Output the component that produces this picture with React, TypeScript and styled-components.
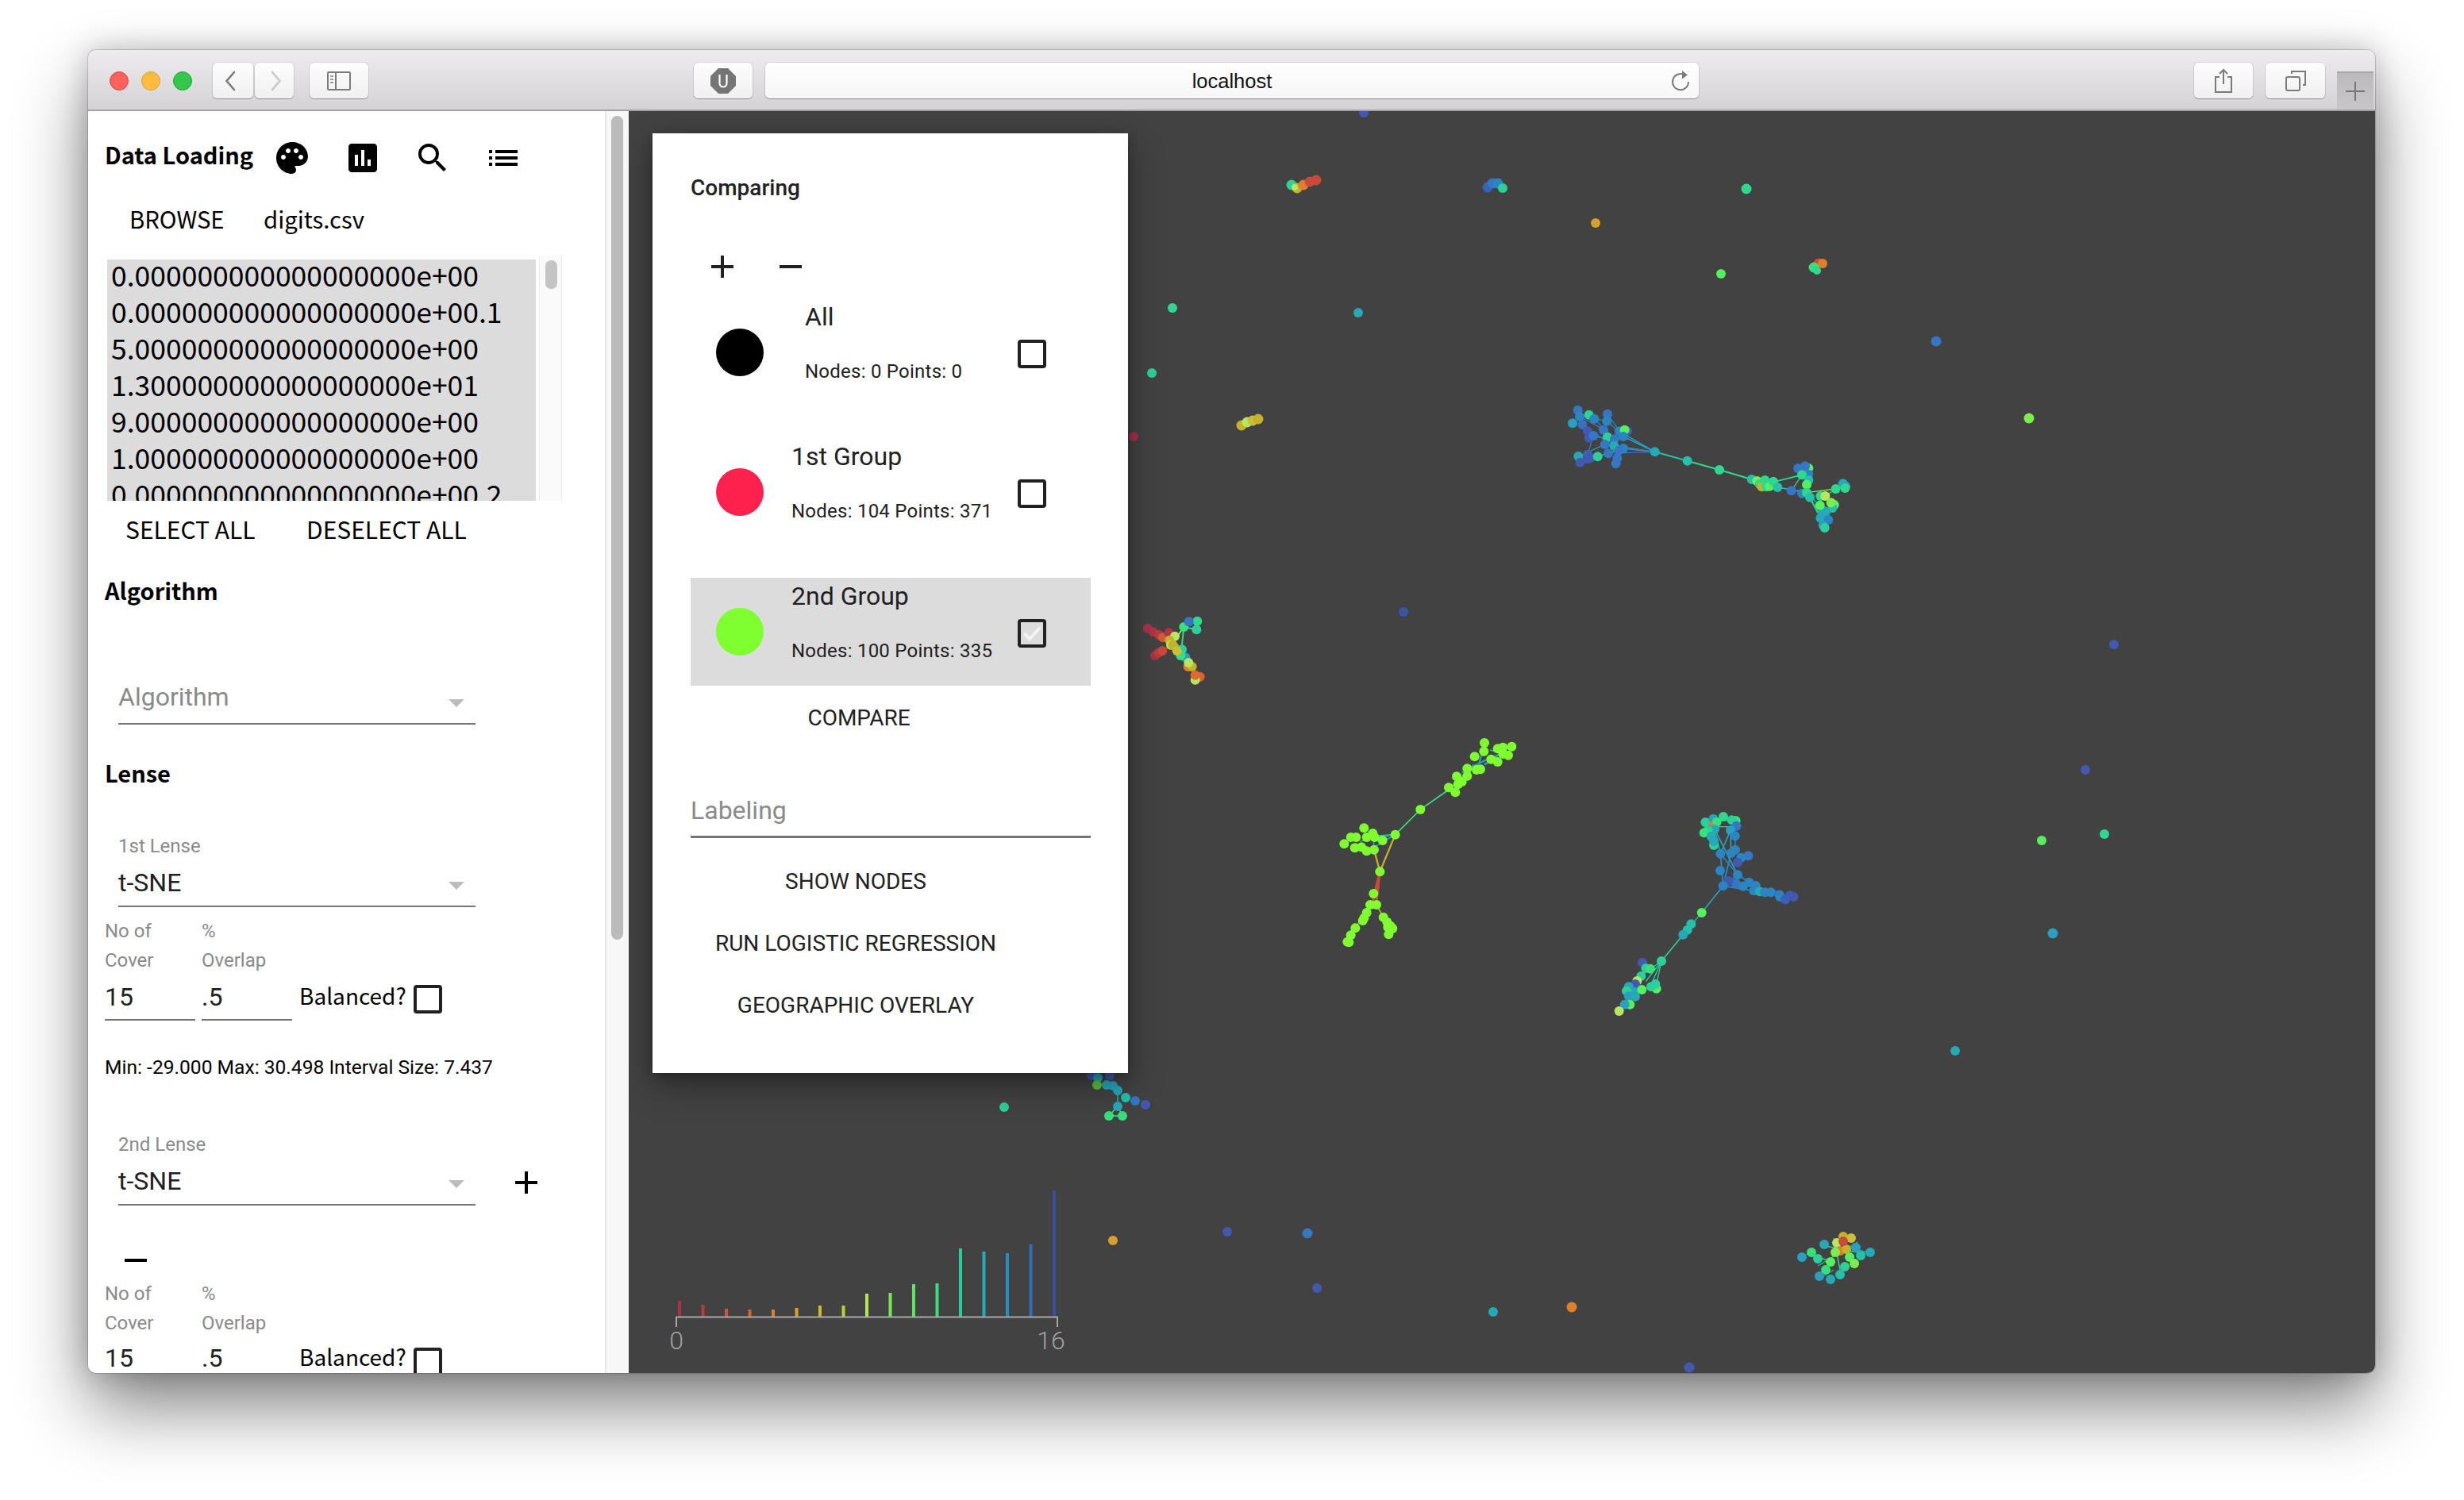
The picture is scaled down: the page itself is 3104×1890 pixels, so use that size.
import React from 'react';
import styled, {createGlobalStyle} from 'styled-components';
import {MdPalette, MdAssessment, MdSearch, MdList, MdAdd, MdRemove} from 'react-icons/md';

const SD = `"Noto Sans CJK KR", "Noto Sans", sans-serif`;
const RB = `Roboto, "Liberation Sans", sans-serif`;

const GlobalStyle = createGlobalStyle`
  html, body { margin: 0; padding: 0; background: #fff; }
  body { width: 3104px; height: 1890px; overflow: hidden; font-family: ${RB}; }
`;

const Page = styled.div`
  width: 3104px;
  height: 1890px;
  padding: 63px 0 0 111px;
  box-sizing: border-box;
`;
const Window = styled.div`
  width: 2881px;
  height: 1667px;
  border-radius: 10px;
  overflow: hidden;
  display: flex;
  flex-direction: column;
  box-shadow: 0 44px 90px rgba(0, 0, 0, 0.48), 0 0 36px rgba(0, 0, 0, 0.22), 0 0 0 1px rgba(0, 0, 0, 0.16);
`;

/* title bar */
const TitleBar = styled.div`
  height: 77px;
  flex: none;
  display: flex;
  align-items: flex-start;
  padding: 16px 0 0 27px;
  box-sizing: border-box;
  background: linear-gradient(#eeecee, #d4d2d4);
  border-bottom: 2px solid #a3a1a3;
`;
const Light = styled.span<{$c: string; $b: string}>`
  width: 24px;
  height: 24px;
  margin: 11px 16px 0 0;
  border-radius: 50%;
  background: ${p => p.$c};
  border: 1px solid ${p => p.$b};
  box-sizing: border-box;
`;
const ChromeBtn = styled.div<{$w: number; $ml?: number; $pl?: number; $pr?: number}>`
  width: ${p => p.$w}px;
  height: 45px;
  margin-left: ${p => p.$ml || 0}px;
  padding: 0 ${p => p.$pr || 0}px 0 ${p => p.$pl || 0}px;
  box-sizing: border-box;
  flex: none;
  display: flex;
  align-items: center;
  justify-content: center;
  border-radius: 6px;
  background: linear-gradient(#fdfdfd, #f1f0f1);
  box-shadow: 0 1px 1px rgba(0, 0, 0, 0.28), 0 0 0 1px rgba(0, 0, 0, 0.07);
`;
const UrlBar = styled.div`
  flex: none;
  width: 1176px;
  height: 45px;
  margin-left: 16px;
  padding-top: 2px;
  box-sizing: border-box;
  position: relative;
  display: flex;
  align-items: center;
  justify-content: center;
  border-radius: 6px;
  background: linear-gradient(#ffffff, #f6f6f6);
  box-shadow: 0 1px 1px rgba(0, 0, 0, 0.28), 0 0 0 1px rgba(0, 0, 0, 0.08);
  font: 25.5px "Liberation Sans", sans-serif;
  color: #111;
`;
const Reload = styled.svg`
  position: absolute;
  right: 10px;
  top: 9px;
`;
const NewTab = styled.div`
  width: 46px;
  height: 48px;
  margin: 11px 0 0 15px;
  flex: none;
  display: flex;
  align-items: center;
  justify-content: center;
  background: linear-gradient(#bcbabc, #c8c6c8);
  border-top: 2px solid #a9a7a9;
  box-sizing: border-box;
`;

/* main area */
const Content = styled.div`
  flex: 1;
  display: flex;
  min-height: 0;
`;
const Sidebar = styled.div`
  width: 681px;
  flex: none;
  display: flex;
  background: #fff;
  overflow: hidden;
`;
const SideContent = styled.div`
  width: 651px;
  flex: none;
  padding-left: 21px;
  box-sizing: border-box;
  overflow: hidden;
  color: #000;
`;
const ScrollTrack = styled.div`
  width: 30px;
  flex: none;
  background: #f7f7f7;
  border-left: 2px solid #e8e8e8;
  box-sizing: border-box;
  padding: 6px 0 0 6px;
`;
const ScrollThumb = styled.div`
  width: 15px;
  height: 1038px;
  border-radius: 8px;
  background: #bbb;
`;
const Header = styled.div`
  display: flex;
  align-items: center;
  height: 48px;
  margin-top: 35px;
`;
const Title = styled.div`
  width: 187px;
  margin: -11px 25px 0 0;
  font: 700 29px ${SD};
  white-space: nowrap;
`;
const IconSlot = styled.span<{$mr?: number}>`
  width: 48px;
  height: 48px;
  flex: none;
  margin-right: ${p => p.$mr || 0}px;
  display: flex;
  align-items: center;
  justify-content: center;
  font-size: 48px;
  color: #000;
`;
const BrowseRow = styled.div`
  display: flex;
  height: 40px;
  margin: 34px 0 0 31px;
  font: 400 29.3px/37px ${SD};
`;
const SideBtn = styled.span<{$w: number}>`
  width: ${p => p.$w}px;
  flex: none;
  white-space: nowrap;
  text-transform: uppercase;
`;
const ListWrap = styled.div`
  display: flex;
  align-items: flex-start;
  margin: 25px 0 0 3px;
  height: 309px;
`;
const ListBody = styled.div`
  width: 540px;
  height: 304px;
  margin-top: 5px;
  padding-left: 5px;
  box-sizing: border-box;
  background: #dcdcdc;
  overflow: hidden;
  font: 400 35.5px/38px ${SD};
  white-space: nowrap;
`;
const ListLine = styled.div`
  height: 38px;
  margin-bottom: 8px;
`;
const ListTrack = styled.div`
  width: 29px;
  height: 309px;
  margin-left: 4px;
  flex: none;
  background: #fafafa;
  border-left: 1px solid #ececec;
  border-right: 1px solid #ececec;
  box-sizing: border-box;
  padding: 6px 0 0 7px;
`;
const ListThumb = styled.div`
  width: 15px;
  height: 36px;
  border-radius: 7px;
  background: #c4c4c4;
`;
const SelectRow = styled.div`
  display: flex;
  height: 40px;
  margin: 17px 0 0 26px;
  font: 400 30px/37px ${SD};
`;
const Heading = styled.div<{$mt: number}>`
  height: 40px;
  margin-top: ${p => p.$mt}px;
  font: 700 29px/36px ${SD};
`;
const FieldLabel = styled.div<{$mt: number}>`
  margin: ${p => p.$mt}px 0 0 17px;
  font: 400 24px/32px ${RB};
  color: #8a8a8a;
  height: 32px;
`;
const SelectValue = styled.div<{$mt: number; $pb: number; $muted?: boolean}>`
  width: 450px;
  box-sizing: content-box;
  margin: ${p => p.$mt}px 0 0 17px;
  padding-bottom: ${p => p.$pb}px;
  height: 44px;
  display: flex;
  justify-content: space-between;
  border-bottom: 2px solid #757575;
  font: 400 32px/44px ${RB};
  color: ${p => (p.$muted ? '#8a8a8a' : '#212121')};
`;
const Arrow = styled.span<{$mt: number}>`
  width: 0;
  height: 0;
  margin: ${p => p.$mt}px 14px 0 0;
  border-left: 10px solid transparent;
  border-right: 10px solid transparent;
  border-top: 10px solid #bcbcbc;
`;
const LenseRow = styled.div`
  display: flex;
  align-items: flex-start;
`;
const PlusSlot = styled(IconSlot)`
  margin: 8px 0 0 40px;
`;
const MinusSlot = styled(IconSlot)`
  margin: 45px 0 0 15px;
`;
const CoverLabels = styled.div<{$mt: number}>`
  display: flex;
  margin-top: ${p => p.$mt}px;
  font: 400 24px/37px ${RB};
  color: #8a8a8a;
`;
const CoverLabel = styled.div`
  width: 122px;
  flex: none;
`;
const InputRow = styled.div<{$mt: number}>`
  display: flex;
  align-items: flex-start;
  margin-top: ${p => p.$mt}px;
`;
const NumInput = styled.div`
  width: 114px;
  height: 44px;
  margin-right: 8px;
  padding-bottom: 4px;
  border-bottom: 2px solid #757575;
  font: 400 32px/41px ${RB};
  color: #212121;
`;
const Balanced = styled.span`
  margin: -4px 11px 0 1px;
  font: 400 28px/44px ${SD};
  white-space: nowrap;
  width: 133px;
`;
const Check = styled.span<{$mt?: number}>`
  width: 36px;
  height: 36px;
  flex: none;
  margin-top: ${p => p.$mt || 0}px;
  box-sizing: border-box;
  border: 4px solid #212121;
  border-radius: 4px;
  display: flex;
  align-items: center;
  justify-content: center;
`;
const Range = styled.div`
  margin-top: 43px;
  font: 400 24.6px/32px ${RB};
  white-space: nowrap;
`;

/* canvas */
const Canvas = styled.div`
  flex: 1;
  position: relative;
  background: #424242;
  overflow: hidden;
`;
const Graph = styled.svg`
  position: absolute;
  left: 0;
  top: 0;
`;
const Histogram = styled.svg`
  position: absolute;
  left: 41px;
  top: 1350px;
`;
const Panel = styled.div`
  position: absolute;
  left: 30px;
  top: 28px;
  width: 599px;
  height: 1184px;
  padding: 51px 47px 0 48px;
  box-sizing: border-box;
  background: #fff;
  color: #212121;
  box-shadow: 0 16px 40px rgba(0, 0, 0, 0.35), 0 4px 12px rgba(0, 0, 0, 0.25);
`;
const PanelTitle = styled.div`
  height: 36px;
  font: 500 28px/36px ${RB};
`;
const PanelIcons = styled.div`
  display: flex;
  margin: 57px 0 0 16px;
`;
const PanelIcon = styled(IconSlot)`
  color: #212121;
`;
const GroupRow = styled.div<{$sel?: boolean; $mt: number}>`
  height: 136px;
  margin-top: ${p => p.$mt}px;
  display: grid;
  grid-template-columns: 127px 285px 36px;
  background: ${p => (p.$sel ? '#dcdcdc' : 'transparent')};
`;
const Dot = styled.span<{$c: string}>`
  width: 60px;
  height: 60px;
  margin: 38px 0 0 32px;
  border-radius: 50%;
  background: ${p => p.$c};
`;
const GroupText = styled.div<{$pl?: number}>`
  padding-left: ${p => p.$pl || 0}px;
`;
const GroupName = styled.div`
  height: 46px;
  font: 400 32px/46px ${RB};
`;
const GroupStats = styled.div`
  margin-top: 23px;
  font: 400 24px/46px ${RB};
  letter-spacing: 0.24px;
  white-space: nowrap;
`;
const ActionBtn = styled.div<{$w: number; $mt: number}>`
  width: ${p => p.$w}px;
  height: 40px;
  margin-top: ${p => p.$mt}px;
  text-align: center;
  font: 400 28px/42px ${RB};
  white-space: nowrap;
`;
const LabelInput = styled.div`
  height: 44px;
  margin-top: 75px;
  padding-bottom: 10px;
  border-bottom: 3px solid #757575;
  font: 400 32px/44px ${RB};
  color: #8a8a8a;
`;

/* graph data, drawn at 3x of page pixels around an origin */
type Node = [number, number, string, number?];
type Edge = [number, number, number, number, string, number?];
interface ClusterData {
  x: number;
  y: number;
  edges: Edge[];
  nodes: Node[];
}

const BLUE = '#3577c4';
const B2 = '#2a85c0';
const B3 = '#2a9fc0';
const IND = '#4358b0';
const TEAL = '#25a9b5';
const TG = '#25c0a8';
const GR = '#2bd09a';
const G2 = '#2fd88f';
const G3 = '#36e07a';
const G4 = '#55ef60';
const LM = '#7aee50';
const YL = '#b5e860';
const OL = '#c8b02a';
const OR = '#df7f2b';
const RD = '#c94a3a';
const MR = '#a5324a';
const LIME = '#7fff2f';

const lime = (pts: number[][]): Node[] => pts.map(([x, y]) => [x, y, LIME] as Node);

const clusters: ClusterData[] = [
  {
    x: 1950,
    y: 480,
    edges: [
      [404, 268, 527, 302, TG, 6], [527, 302, 648, 336, G2, 6], [648, 336, 770, 372, G2, 7],
      [404, 268, 285, 210, B3, 5], [404, 268, 270, 190, B3, 4], [404, 268, 285, 255, B3, 5],
      [404, 268, 250, 245, B3, 4], [404, 268, 228, 274, BLUE, 4], [404, 268, 215, 240, BLUE, 4],
      [175, 143, 252, 220, B2, 4], [150, 190, 285, 255, B2, 4], [225, 152, 285, 210, B2, 4],
      [130, 165, 270, 262, BLUE, 4], [172, 207, 150, 278, BLUE, 4], [215, 240, 115, 285, TEAL, 4],
      [120, 135, 215, 185, B2, 4], [188, 286, 285, 255, GR, 4], [175, 143, 225, 152, B2, 4],
      [155, 215, 285, 210, BLUE, 4], [225, 125, 285, 210, B2, 4],
      [860, 380, 960, 355, G2, 5], [920, 415, 960, 355, G2, 4], [868, 402, 978, 422, TG, 5],
      [978, 422, 1088, 408, LM, 4], [990, 440, 1030, 510, TG, 5], [978, 422, 1050, 495, TG, 4],
      [978, 422, 1020, 500, G2, 4], [1088, 408, 1048, 435, G2, 4],
    ],
    nodes: [
      [113, 110, BLUE], [120, 135, B2], [93, 160, B3], [130, 165, '#3a6ec0'], [155, 128, GR],
      [175, 143, B2], [225, 125, BLUE], [223, 152, B2], [150, 190, IND], [210, 185, BLUE],
      [300, 190, IND], [270, 190, B2], [290, 185, G4], [155, 215, IND], [172, 207, BLUE],
      [225, 212, GR], [252, 220, BLUE], [285, 210, B2], [215, 240, BLUE], [250, 245, TEAL],
      [285, 255, B2], [270, 262, BLUE], [228, 274, BLUE], [150, 278, '#3a60b8'], [115, 285, TEAL],
      [122, 308, IND], [150, 295, IND], [160, 292, IND], [188, 286, GR], [262, 292, BLUE], [257, 312, BLUE],
      [404, 268, TEAL], [527, 302, TG], [648, 336, G2],
      [770, 372, TG], [790, 378, LM], [800, 390, G2], [808, 400, OL], [820, 375, G2], [825, 400, G2],
      [838, 398, G4], [852, 380, G2], [868, 402, TG], [920, 415, BLUE], [960, 425, B2],
      [985, 330, G4], [945, 330, BLUE], [972, 322, BLUE], [985, 353, B2], [960, 355, G2], [985, 375, TG],
      [978, 392, G4], [978, 422, G2], [990, 440, TG], [1030, 435, G2], [1082, 468, G4], [1075, 480, TG],
      [1050, 495, TEAL], [1040, 490, TEAL], [1030, 518, TEAL], [1060, 525, B2], [1040, 545, B3],
      [1046, 555, GR], [1048, 435, YL], [1070, 460, LM], [1028, 470, G4], [1088, 408, G2],
      [1115, 388, TEAL], [1125, 398, B3], [1123, 405, G2],
    ],
  },
  {
    x: 1660,
    y: 910,
    edges: [
      [293, 425, 388, 330, G3, 5], [388, 330, 495, 255, G3, 5], [293, 425, 235, 565, OL, 7],
      [213, 482, 235, 565, OL, 7], [235, 565, 205, 690, RD, 10], [235, 565, 222, 680, RD, 9],
      [198, 690, 142, 778, OR, 5], [222, 690, 248, 737, OL, 5], [293, 425, 225, 430, TG, 6],
      [293, 425, 215, 470, B3, 5], [293, 425, 160, 450, TEAL, 4], [210, 430, 213, 482, B3, 5],
      [510, 240, 590, 160, B3, 6], [620, 120, 610, 155, TEAL, 6], [650, 105, 690, 115, TEAL, 5],
      [620, 150, 690, 120, B3, 6], [630, 160, 680, 130, B3, 8], [545, 190, 620, 150, TEAL, 6],
    ],
    nodes: lime([
      [630, 78], [628, 110], [593, 130], [680, 100], [700, 95], [733, 92], [720, 125], [700, 120],
      [655, 140], [680, 150], [600, 180], [565, 175], [615, 178], [525, 205], [565, 203], [545, 225],
      [495, 247], [520, 265], [530, 235], [388, 330], [293, 425], [175, 400], [208, 420], [245, 447],
      [185, 435], [215, 435], [145, 435], [125, 435], [100, 460], [140, 475], [165, 472], [185, 487],
      [213, 482], [235, 565], [211, 648], [198, 690], [222, 690], [185, 720], [175, 740], [170, 750],
      [142, 778], [125, 805], [112, 830], [118, 832], [248, 737], [262, 755], [275, 770], [283, 780],
      [265, 775], [268, 802],
    ]),
  },
  {
    x: 2010,
    y: 1010,
    edges: [
      [482, 319, 401, 420, TEAL, 5], [401, 420, 331, 503, TEAL, 5], [331, 503, 249, 603, GR, 5],
      [249, 603, 190, 680, GR, 4], [249, 603, 215, 680, GR, 4], [249, 603, 230, 690, GR, 4], [249, 603, 170, 660, GR, 4],
      [472, 197, 482, 319, B2, 6], [512, 195, 482, 319, B2, 6], [450, 105, 537, 277, B3, 5],
      [510, 108, 472, 197, B3, 5], [450, 105, 472, 197, TEAL, 5], [510, 108, 512, 195, TEAL, 5],
      [527, 130, 528, 182, B2, 5], [415, 78, 510, 70, GR, 4], [450, 95, 510, 95, GR, 4], [472, 197, 537, 277, B2, 5],
      [482, 319, 598, 337, B2, 5], [537, 277, 605, 318, B2, 5], [482, 319, 537, 277, B2, 5],
    ],
    nodes: [
      [415, 78, GR], [445, 65, B3], [483, 57, G2], [530, 72, G3], [515, 70, GR], [458, 77, G3],
      [437, 85, OR, 8], [532, 92, BLUE], [510, 108, B3], [450, 105, TEAL], [425, 108, GR], [410, 118, G3],
      [437, 132, TEAL], [447, 165, GR], [447, 150, TEAL], [527, 130, B2], [528, 182, B2], [472, 197, B2],
      [512, 195, B2], [577, 205, BLUE], [550, 212, B2], [537, 230, IND], [471, 261, B2], [537, 277, B2],
      [530, 310, BLUE], [502, 300, IND], [482, 319, B2], [557, 320, B2], [580, 305, B2], [605, 318, B2],
      [598, 337, B2], [620, 340, TEAL], [640, 343, B2], [663, 343, B2], [695, 352, BLUE], [697, 360, B2],
      [735, 355, '#3f5ab0'], [717, 370, '#3a60b8'], [748, 360, IND],
      [401, 420, G4], [361, 463, TG], [347, 485, TG], [331, 503, TEAL], [249, 603, GR], [177, 608, IND],
      [190, 630, GR], [207, 632, G3], [172, 660, GR], [157, 678, YL], [150, 690, IND], [230, 707, G4],
      [210, 700, GR], [226, 690, GR], [125, 700, TEAL], [148, 720, TEAL], [175, 711, G4], [117, 716, GR],
      [125, 735, B3], [150, 737, TEAL], [130, 767, G4], [110, 767, B3], [89, 792, YL],
    ],
  },
  {
    x: 1400,
    y: 760,
    edges: [
      [274, 90, 232, 150, LM, 6], [274, 90, 265, 175, G2, 6], [274, 90, 322, 100, GR, 6],
      [240, 145, 265, 175, G3, 6], [195, 130, 225, 155, OR, 5], [193, 180, 225, 160, RD, 5],
    ],
    nodes: [
      [137, 95, MR], [158, 108, '#ac3547'], [180, 120, '#b93a3f'], [195, 130, '#d05a35'], [218, 112, '#b03545'],
      [165, 198, MR], [178, 188, '#b93a3f'], [193, 180, RD], [240, 125, YL], [220, 140, OL], [225, 158, YL],
      [232, 158, OL], [274, 90, G3], [325, 68, G2], [293, 70, BLUE], [322, 100, GR], [267, 175, GR],
      [280, 205, B3], [262, 198, G3], [248, 180, '#c8c03a'], [290, 240, OR], [305, 240, OL], [292, 225, YL],
      [335, 278, '#d9622d'], [317, 290, YL], [317, 272, '#df6a2b'],
    ],
  },
  {
    x: 1360,
    y: 1340,
    edges: [
      [144, 162, 111, 198, G3, 5], [144, 162, 162, 198, G3, 5], [111, 198, 162, 198, G3, 5],
      [144, 102, 144, 162, TEAL, 5],
    ],
    nodes: [
      [45, 45, IND], [114, 45, IND], [69, 54, TEAL], [66, 81, '#5cc040'], [102, 81, TEAL],
      [126, 84, B3], [144, 102, TEAL], [174, 129, TG], [210, 141, BLUE], [249, 156, IND],
      [144, 162, TEAL], [111, 198, G3], [162, 198, G3],
    ],
  },
  {
    x: 2250,
    y: 1530,
    edges: [
      [78, 150, 180, 180, G2, 4], [180, 90, 210, 240, G3, 4], [150, 120, 300, 150, GR, 4],
      [120, 195, 270, 105, TG, 4], [270, 135, 324, 147, TEAL, 4], [180, 210, 120, 246, TEAL, 4],
    ],
    nodes: [
      [60, 162, B3], [96, 144, G3], [120, 168, GR], [144, 114, TEAL], [168, 180, G4], [150, 210, G3],
      [192, 108, YL], [216, 84, OL], [246, 90, '#c8c03a'], [204, 138, OR], [228, 132, OL], [186, 144, LM],
      [240, 162, G4], [222, 198, GR], [264, 126, B3], [258, 186, LM], [204, 228, TG], [168, 246, TEAL],
      [126, 234, B3], [318, 144, TEAL], [282, 156, TG], [216, 102, RD],
    ],
  },
];

// page coordinates, radius in page pixels
const singles: [number, number, string, number][] = [
  [1718, 142, IND, 6], [2200, 238, G2, 6.5], [2010, 281, '#d8a02a', 6], [2168, 345, G4, 6], [1711, 394, TEAL, 6],
  [1477, 388, G2, 6], [1451, 470, GR, 6], [1428, 550, MR, 6], [2439, 430, BLUE, 6.5], [2556, 527, LM, 6.5],
  [1768, 771, '#3a55a8', 6], [2663, 812, IND, 6], [2627, 970, IND, 6], [2572, 1059, G4, 6],
  [2651, 1051, G2, 6], [2586, 1176, B3, 6.5], [2463, 1324, TEAL, 6], [1265, 1395, GR, 6], [1402, 1563, '#d8a02a', 6],
  [1546, 1552, IND, 6], [1647, 1554, BLUE, 6.5], [1659, 1623, IND, 6], [1881, 1653, TEAL, 6], [1980, 1647, OR, 6.5],
  [2128, 1723, IND, 6.5],
  // tiny groups
  [1627, 233, GR, 6.5], [1634, 237, OL, 6.5], [1642, 233, OR, 6.5], [1650, 229, RD, 6.5], [1658, 227, RD, 6.5], [1631, 236, YL, 4],
  [1874, 236, '#3a60b8', 6.5], [1880, 231, BLUE, 6.5], [1887, 231, B2, 6.5], [1893, 237, GR, 6],
  [2291, 332, RD, 6.5], [2296, 332, OR, 6], [2285, 337, G3, 6.5], [2289, 341, G2, 5],
  [1564, 536, OL, 6.5], [1571, 532, YL, 6.5], [1578, 530, '#c8c03a', 6.5], [1585, 528, OL, 6.5],
];

const bars: [number, string][] = [
  [20, '#a5324a'], [15, '#b93a3f'], [10, '#d4523a'], [9, '#d9622d'], [9, '#df7f2b'], [11, '#dca12b'],
  [14, '#cdb92d'], [14, '#bad13a'], [29, '#b2e555'], [30, '#74ec51'], [41, '#57e860'], [42, '#36e07a'],
  [86, '#25cf9b'], [82, '#22adb8'], [80, '#2190c0'], [91, '#2e6fb8'], [159, '#3b4da0'],
];

const ClusterGroup = ({x, y, edges, nodes}: ClusterData) => (
  <g transform={`translate(${x} ${y}) scale(${1 / 3})`}>
    {edges.map((e, i) => (
      <line key={i} x1={e[0]} y1={e[1]} x2={e[2]} y2={e[3]} stroke={e[4]} strokeWidth={e[5] || 4} />
    ))}
    {nodes.map((n, i) => (
      <circle key={i} cx={n[0]} cy={n[1]} r={n[3] || 18} fill={n[2]} />
    ))}
  </g>
);

const GraphView = () => (
  <Graph width={2200} height={1590} viewBox="792 140 2200 1590">
    {clusters.map((c, i) => (
      <ClusterGroup key={i} {...c} />
    ))}
    {singles.map((n, i) => (
      <circle key={i} cx={n[0]} cy={n[1]} r={n[3]} fill={n[2]} />
    ))}
  </Graph>
);

const HistogramView = () => (
  <Histogram width={520} height={240} viewBox="833 1490 520 240">
    {bars.map(([h, c], i) => (
      <rect key={i} x={854 + i * 29.5} y={1659 - h} width={4} height={h} fill={c} />
    ))}
    <path d="M852 1672V1659.5H1332V1672" fill="none" stroke="#a8a8a8" strokeWidth={2} />
    <text x={852} y={1700} textAnchor="middle" fontFamily="Roboto, sans-serif" fontWeight={300} fontSize={32} fill="#a0a0a0">
      0
    </text>
    <text x={1324} y={1700} textAnchor="middle" fontFamily="Roboto, sans-serif" fontWeight={300} fontSize={32} fill="#a0a0a0">
      16
    </text>
  </Histogram>
);

const TitleBarView = () => (
  <TitleBar>
    <Light $c="#fc615d" $b="#e0443e" />
    <Light $c="#fdbc40" $b="#dea123" />
    <Light $c="#34c84a" $b="#1aab29" />
    <ChromeBtn $w={51} $ml={10} $pr={7}>
      <svg width="14" height="26" viewBox="0 0 14 26">
        <path d="M12 2 2.5 13 12 24" fill="none" stroke="#7b7b7b" strokeWidth={2.6} strokeLinecap="round" />
      </svg>
    </ChromeBtn>
    <ChromeBtn $w={49} $ml={2} $pl={4}>
      <svg width="14" height="26" viewBox="0 0 14 26">
        <path d="M2 2l9.5 11L2 24" fill="none" stroke="#c8c8c8" strokeWidth={2.6} strokeLinecap="round" />
      </svg>
    </ChromeBtn>
    <ChromeBtn $w={74} $ml={20}>
      <svg width="30" height="24" viewBox="0 0 30 24">
        <rect x="1" y="1" width="28" height="22" rx="1" fill="none" stroke="#7b7b7b" strokeWidth={2} />
        <path d="M11 1v22" stroke="#7b7b7b" strokeWidth={2} />
        <path d="M4 6h4M4 10h4M4 14h4" stroke="#9a9a9a" strokeWidth={2} />
      </svg>
    </ChromeBtn>
    <ChromeBtn $w={74} $ml={410}>
      <svg width="32" height="32" viewBox="0 0 32 32">
        <path d="M10 0h12l10 10v12L22 32H10L0 22V10z" fill="#757575" />
        <path d="M11.5 8v11a4.5 4.5 0 0 0 9 0V8" fill="none" stroke="#fff" strokeWidth={2.2} />
      </svg>
    </ChromeBtn>
    <UrlBar>
      localhost
      <Reload width="26" height="28" viewBox="0 0 26 28">
        <path d="M18 6.5a10 10 0 1 0 5 8.5" fill="none" stroke="#7b7b7b" strokeWidth={2} />
        <path d="M15 1l7 5.5-7 5z" fill="#7b7b7b" />
      </Reload>
    </UrlBar>
    <ChromeBtn $w={74} $ml={624}>
      <svg width="24" height="32" viewBox="0 0 24 32">
        <path d="M7 11H2v19h20V11h-5" fill="none" stroke="#7b7b7b" strokeWidth={2} />
        <path d="M12 20V2M7 7l5-5 5 5" fill="none" stroke="#7b7b7b" strokeWidth={2} />
      </svg>
    </ChromeBtn>
    <ChromeBtn $w={75} $ml={16}>
      <svg width="26" height="26" viewBox="0 0 26 26">
        <rect x="1" y="8" width="17" height="17" rx="2" fill="none" stroke="#7b7b7b" strokeWidth={2} />
        <path d="M8 4V1h17v17h-3" fill="none" stroke="#7b7b7b" strokeWidth={2} />
      </svg>
    </ChromeBtn>
    <NewTab>
      <svg width="24" height="24" viewBox="0 0 24 24">
        <path d="M12 0v24M0 12h24" stroke="#757575" strokeWidth={2} />
      </svg>
    </NewTab>
  </TitleBar>
);

const columns = [
  '0.000000000000000000e+00',
  '0.000000000000000000e+00.1',
  '5.000000000000000000e+00',
  '1.300000000000000000e+01',
  '9.000000000000000000e+00',
  '1.000000000000000000e+00',
  '0.000000000000000000e+00.2',
];

const CoverBlock = ({mt, inputMt, checkMt}: {mt: number; inputMt: number; checkMt: number}) => (
  <>
    <CoverLabels $mt={mt}>
      <CoverLabel>No of<br />Cover</CoverLabel>
      <CoverLabel>%<br />Overlap</CoverLabel>
    </CoverLabels>
    <InputRow $mt={inputMt}>
      <NumInput>15</NumInput>
      <NumInput>.5</NumInput>
      <Balanced>Balanced?</Balanced>
      <Check $mt={checkMt} />
    </InputRow>
  </>
);

const SidebarView = () => (
  <Sidebar>
    <SideContent>
      <Header>
        <Title>Data Loading</Title>
        <IconSlot $mr={40.6}><MdPalette /></IconSlot>
        <IconSlot $mr={40.6}><MdAssessment /></IconSlot>
        <IconSlot $mr={40.6}><MdSearch /></IconSlot>
        <IconSlot><MdList /></IconSlot>
      </Header>
      <BrowseRow>
        <SideBtn $w={169}>Browse</SideBtn>
        <span>digits.csv</span>
      </BrowseRow>
      <ListWrap>
        <ListBody>
          {columns.map(c => (
            <ListLine key={c}>{c}</ListLine>
          ))}
        </ListBody>
        <ListTrack><ListThumb /></ListTrack>
      </ListWrap>
      <SelectRow>
        <SideBtn $w={228}>Select all</SideBtn>
        <SideBtn $w={220}>Deselect all</SideBtn>
      </SelectRow>
      <Heading $mt={37}>Algorithm</Heading>
      <SelectValue $mt={91} $pb={11} $muted>
        Algorithm
        <Arrow $mt={25} />
      </SelectValue>
      <Heading $mt={42}>Lense</Heading>
      <FieldLabel $mt={55}>1st Lense</FieldLabel>
      <SelectValue $mt={8} $pb={7}>
        t-SNE
        <Arrow $mt={21} />
      </SelectValue>
      <CoverBlock mt={12} inputMt={7} checkMt={5} />
      <Range>Min: -29.000 Max: 30.498 Interval Size: 7.437</Range>
      <FieldLabel $mt={65}>2nd Lense</FieldLabel>
      <LenseRow>
        <SelectValue $mt={8} $pb={7}>
          t-SNE
          <Arrow $mt={21} />
        </SelectValue>
        <PlusSlot><MdAdd /></PlusSlot>
      </LenseRow>
      <MinusSlot><MdRemove /></MinusSlot>
      <CoverBlock mt={0} inputMt={5} checkMt={7} />
    </SideContent>
    <ScrollTrack><ScrollThumb /></ScrollTrack>
  </Sidebar>
);

const groups = [
  {name: 'All', stats: 'Nodes: 0 Points: 0', color: '#000', pl: 17, mt: 16},
  {name: '1st Group', stats: 'Nodes: 104 Points: 371', color: '#ff214d', pl: 0, mt: 40},
  {name: '2nd Group', stats: 'Nodes: 100 Points: 335', color: '#7fff2f', pl: 0, mt: 40, selected: true},
];

const ComparePanel = () => (
  <Panel>
    <PanelTitle>Comparing</PanelTitle>
    <PanelIcons>
      <PanelIcon $mr={38}><MdAdd /></PanelIcon>
      <PanelIcon><MdRemove /></PanelIcon>
    </PanelIcons>
    {groups.map(g => (
      <GroupRow key={g.name} $mt={g.mt} $sel={g.selected}>
        <Dot $c={g.color} />
        <GroupText $pl={g.pl}>
          <GroupName>{g.name}</GroupName>
          <GroupStats>{g.stats}</GroupStats>
        </GroupText>
        <Check $mt={52}>
          {g.selected && (
            <svg width="26" height="22" viewBox="0 0 26 22">
              <path d="M3 11l7 7L23 4" fill="none" stroke="#f4f4f4" strokeWidth={4} />
            </svg>
          )}
        </Check>
      </GroupRow>
    ))}
    <ActionBtn $w={424} $mt={20}>COMPARE</ActionBtn>
    <LabelInput>Labeling</LabelInput>
    <ActionBtn $w={416} $mt={34}>SHOW NODES</ActionBtn>
    <ActionBtn $w={416} $mt={38}>RUN LOGISTIC REGRESSION</ActionBtn>
    <ActionBtn $w={416} $mt={38}>GEOGRAPHIC OVERLAY</ActionBtn>
  </Panel>
);

export default function App() {
  return (
    <Page>
      <GlobalStyle />
      <Window>
        <TitleBarView />
        <Content>
          <SidebarView />
          <Canvas>
            <GraphView />
            <HistogramView />
            <ComparePanel />
          </Canvas>
        </Content>
      </Window>
    </Page>
  );
}
